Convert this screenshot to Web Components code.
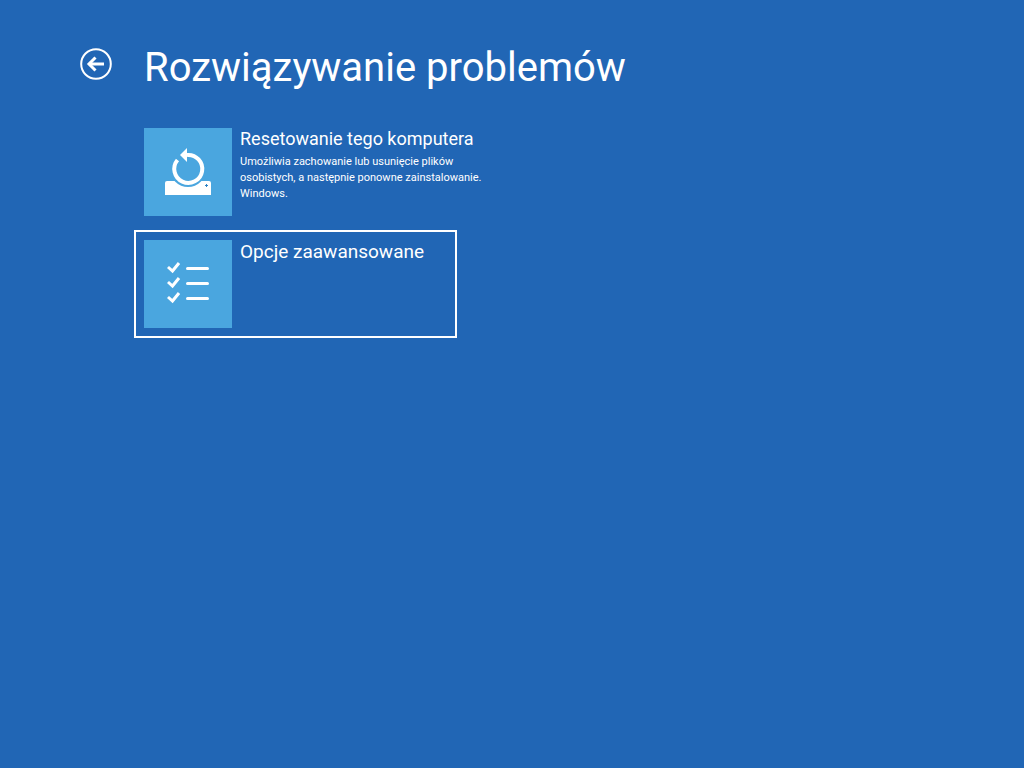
<!DOCTYPE html>
<html lang="pl">
<head>
<meta charset="utf-8">
<meta name="viewport" content="width=device-width, initial-scale=1">
<title>Rozwiązywanie problemów</title>
<style>
    html, body {
        margin: 0;
        min-height: 100%;
        background: #2166b5;
    }

    body {
        color: #ffffff;
        font-family: Roboto, "Liberation Sans", Arial, sans-serif;
    }
</style>
</head>
<body>
<recovery-screen heading="Rozwiązywanie problemów">
    <option-tile label="Resetowanie tego komputera">
        <svg slot="icon" width="88" height="88" viewBox="0 0 88 88" aria-hidden="true">
            <path d="M23 53h42q2 0 2 2v12H21V55q0-2 2-2z" fill="#fff"/>
            <circle cx="44" cy="41" r="18" fill="#4aa6df"/>
            <path d="M43 27a14 14 0 1 1-9.500 5" fill="none" stroke="#fff" stroke-width="4"/>
            <path d="M36 27l7-7v14z" fill="#fff"/>
            <path d="M62.500 56v3M61 57.500h3" stroke="#2f83c4" stroke-width="1"/>
        </svg>
        Umożliwia zachowanie lub usunięcie plików osobistych, a następnie ponowne zainstalowanie. Windows.
    </option-tile>
    <option-tile label="Opcje zaawansowane" selected>
        <svg slot="icon" width="88" height="88" viewBox="0 0 88 88" aria-hidden="true">
            <g fill="none" stroke="#fff" stroke-width="3">
                <path d="M24 27l4.500 4L35 23M24 42l4.500 4L35 38M24 57l4.500 4L35 53"/>
                <path d="M43.500 28.500h20M43.500 43.500h20M43.500 58.500h20" stroke-linecap="round"/>
            </g>
        </svg>
    </option-tile>
</recovery-screen>

<script>
(function () {
    class BackButton extends HTMLElement {
        constructor() {
            super();
            this.attachShadow({ mode: 'open' });
        }

        connectedCallback() {
            this.shadowRoot.innerHTML = `
                <style>
                    :host {
                        display: block;
                        flex: none;
                    }

                    button {
                        display: block;
                        padding: 0;
                        border: 0;
                        border-radius: 50%;
                        background: transparent;
                        color: inherit;
                        cursor: pointer;
                    }

                    svg {
                        display: block;
                    }
                </style>
                <button type="button" aria-label="Wstecz">
                    <svg width="32" height="32" viewBox="0 0 32 32" fill="none" stroke="currentColor" aria-hidden="true">
                        <circle cx="16" cy="16" r="14.800" stroke-width="2"/>
                        <path d="M24 16H9" stroke-width="3"/>
                        <path d="M15.500 9.500L9 16l6.500 6.500" stroke-width="3"/>
                    </svg>
                </button>
            `;
        }
    }

    class OptionTile extends HTMLElement {
        static get observedAttributes() {
            return ['label'];
        }

        constructor() {
            super();
            this.attachShadow({ mode: 'open' });
        }

        connectedCallback() {
            this.render();
        }

        attributeChangedCallback() {
            if (this.isConnected) this.render();
        }

        render() {
            this.shadowRoot.innerHTML = `
                <style>
                    :host {
                        display: block;
                        max-width: 100%;
                    }

                    button {
                        display: flex;
                        align-items: flex-start;
                        gap: 8px;
                        box-sizing: border-box;
                        min-width: 323px;
                        max-width: 100%;
                        padding: 8px;
                        border: 2px solid transparent;
                        background: transparent;
                        color: inherit;
                        font: inherit;
                        text-align: left;
                        cursor: pointer;
                    }

                    :host([selected]) button {
                        border-color: #ffffff;
                    }

                    .icon {
                        flex: none;
                        width: 88px;
                        height: 88px;
                        background: #4aa6df;
                    }

                    ::slotted(svg) {
                        display: block;
                    }

                    .text {
                        display: block;
                        max-width: 256px;
                    }

                    .label {
                        display: block;
                        font-size: 18px;
                        line-height: 22px;
                    }

                    :host([selected]) .label {
                        font-size: 19px;
                        line-height: 24px;
                    }

                    .description {
                        display: block;
                        margin-top: 4px;
                        font-size: 11px;
                        line-height: 16px;
                    }
                </style>
                <button type="button">
                    <span class="icon"><slot name="icon"></slot></span>
                    <span class="text">
                        <span class="label"></span>
                        <span class="description"><slot></slot></span>
                    </span>
                </button>
            `;
            this.shadowRoot.querySelector('.label').textContent = this.getAttribute('label') || '';
        }
    }

    class RecoveryScreen extends HTMLElement {
        constructor() {
            super();
            this.attachShadow({ mode: 'open' });
        }

        connectedCallback() {
            this.shadowRoot.innerHTML = `
                <style>
                    :host {
                        display: block;
                        padding: 44px 80px;
                    }

                    header {
                        display: flex;
                        align-items: flex-start;
                        gap: 32px;
                    }

                    back-button {
                        margin-top: 4px;
                    }

                    h1 {
                        margin: 0;
                        font-size: 40px;
                        font-weight: 400;
                        line-height: 48px;
                    }

                    main {
                        display: flex;
                        flex-direction: column;
                        align-items: flex-start;
                        gap: 4px;
                        margin-top: 26px;
                        padding-left: 54px;
                    }
                </style>
                <header>
                    <back-button></back-button>
                    <h1></h1>
                </header>
                <main><slot></slot></main>
            `;
            this.shadowRoot.querySelector('h1').textContent = this.getAttribute('heading') || '';
        }
    }

    customElements.define('back-button', BackButton);
    customElements.define('option-tile', OptionTile);
    customElements.define('recovery-screen', RecoveryScreen);
}());
</script>
</body>
</html>
